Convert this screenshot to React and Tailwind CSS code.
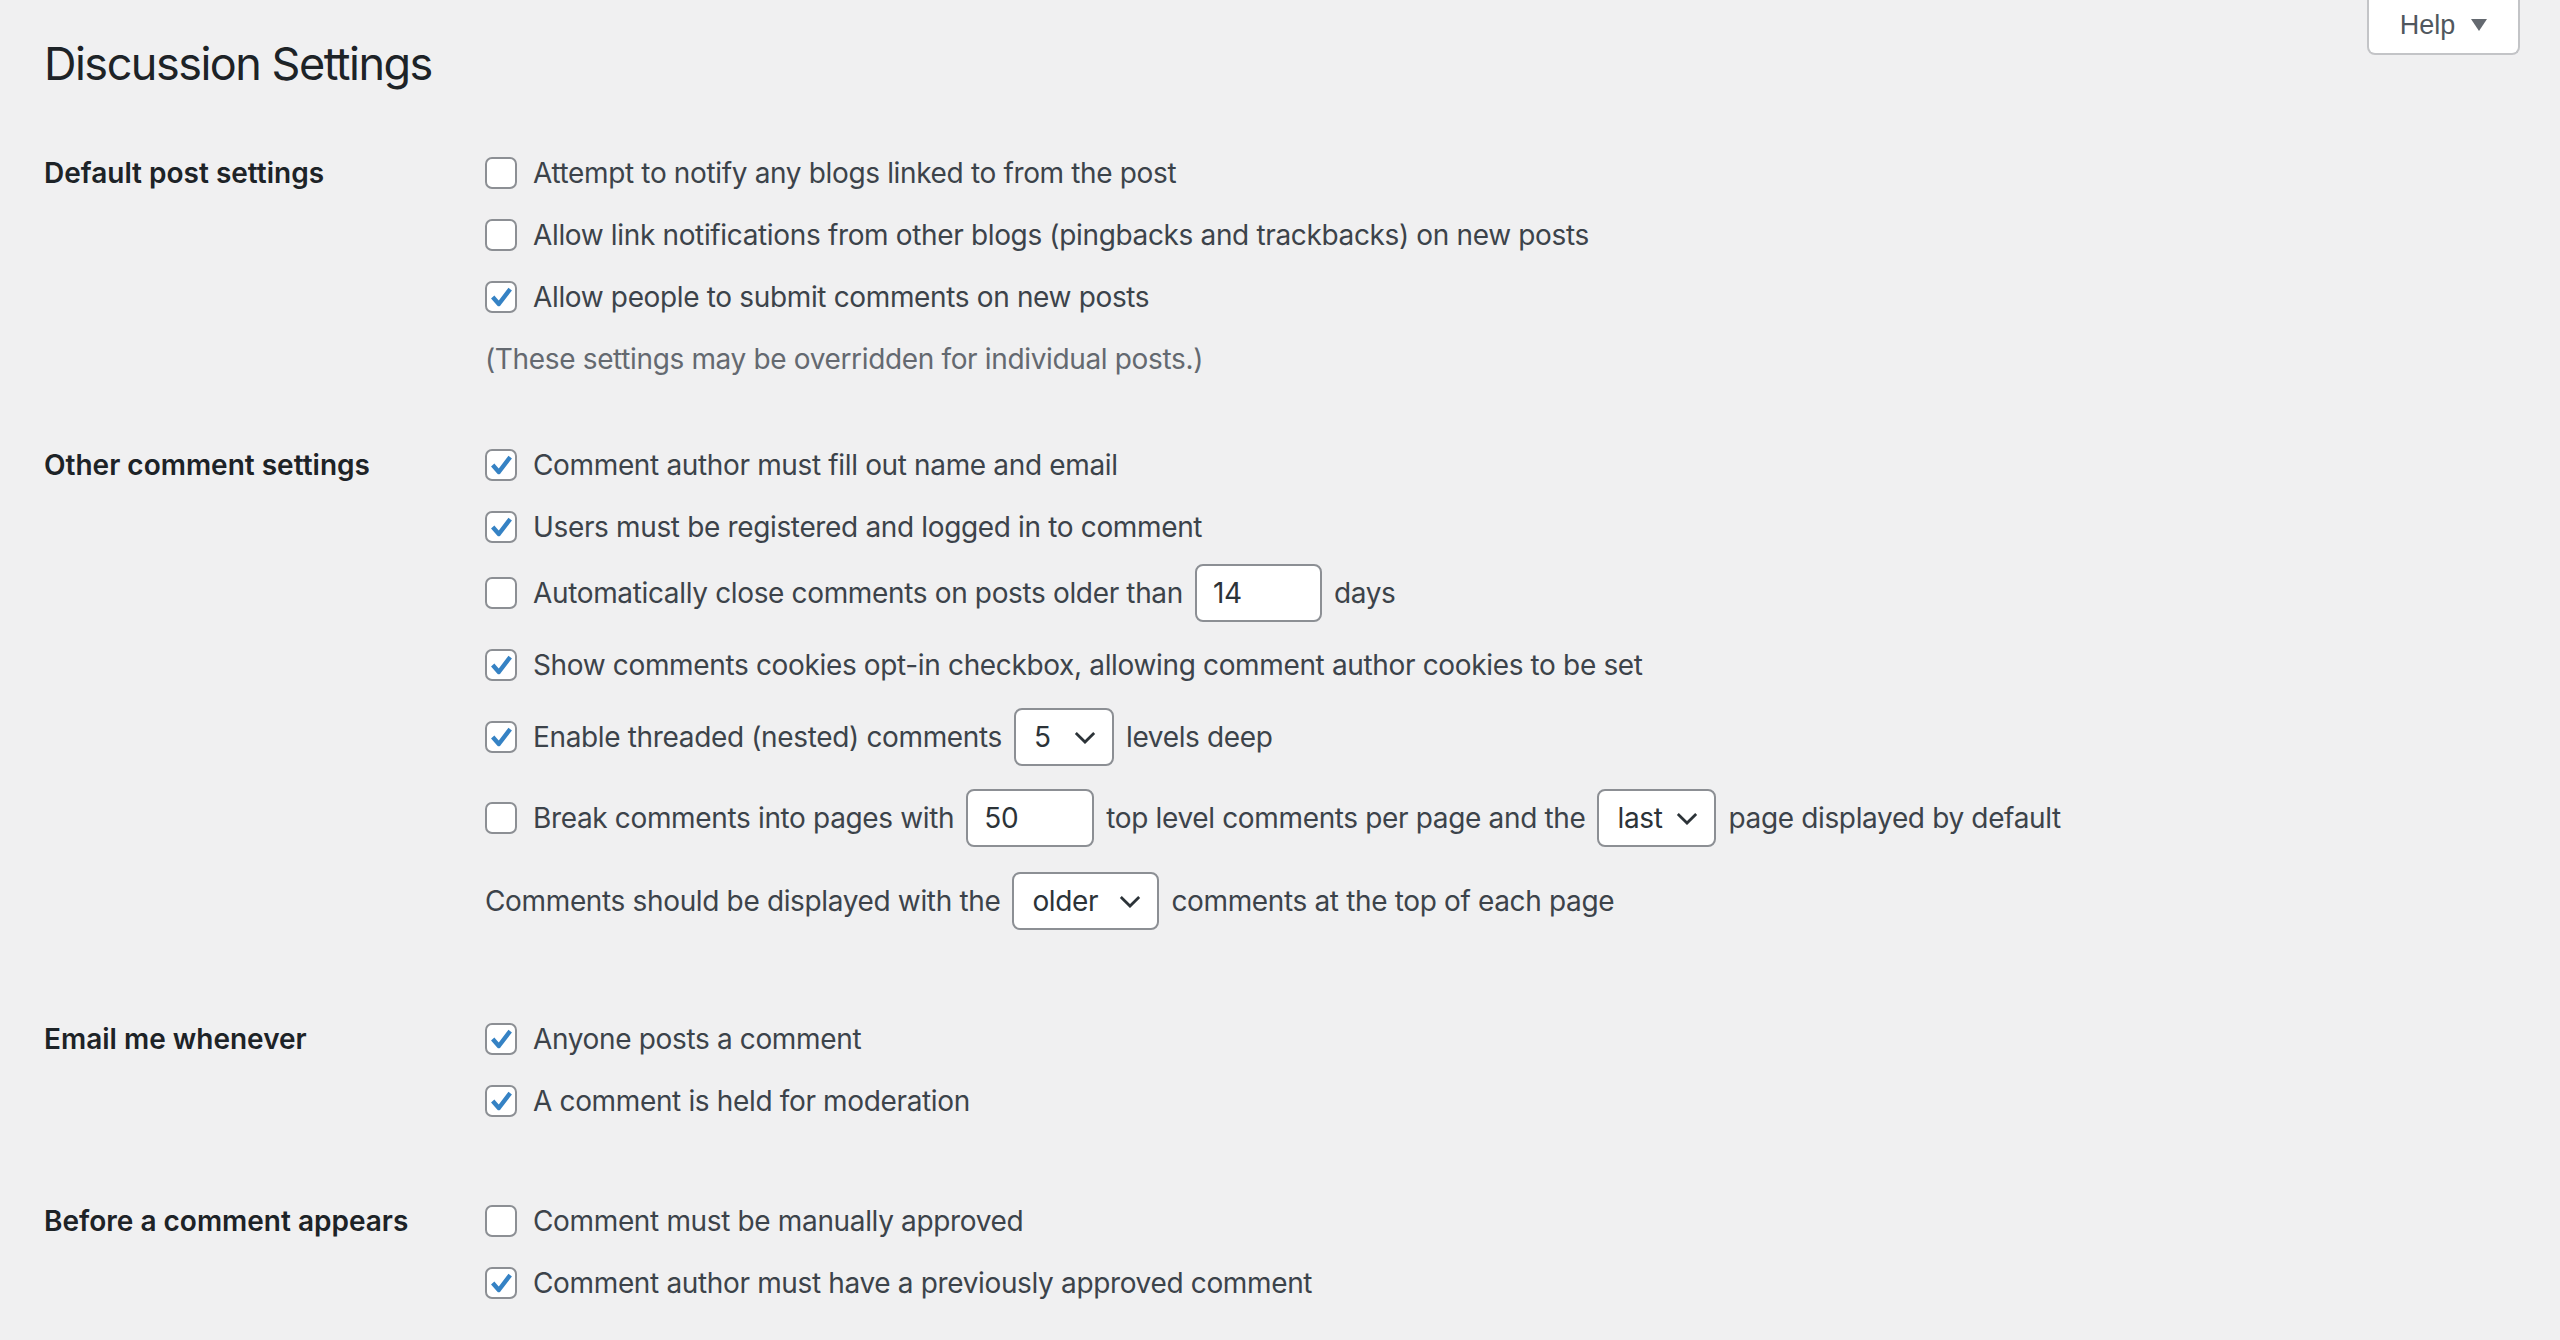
const Checkbox = ({ checked = false }) => (
  <span className="mr-[16px] flex size-[32px] shrink-0 items-center justify-center rounded-[7px] border-2 border-[#8c8f94] bg-white">
    {checked && (
      <svg viewBox="0 0 32 32" className="size-[30px]">
        <path
          d="M6.5 16 L13.5 24 L26.5 7"
          fill="none"
          stroke="#3582c4"
          strokeWidth="5"
          strokeLinejoin="round"
        />
      </svg>
    )}
  </span>
);

const TextInput = ({ value, className = "" }) => (
  <span
    className={`mx-[12px] flex h-[58px] items-center rounded-[8px] border-2 border-[#8c8f94] bg-white pl-[16px] text-[#2c3338] ${className}`}
  >
    {value}
  </span>
);

const Select = ({ value, className = "" }) => (
  <span
    className={`mx-[12px] flex h-[58px] items-center justify-between rounded-[8px] border-2 border-[#8c8f94] bg-white pl-[18px] pr-[16px] text-[#2c3338] ${className}`}
  >
    {value}
    <svg viewBox="0 0 24 14" className="h-[13px] w-[22px]">
      <path
        d="M2 2 L12 12 L22 2"
        fill="none"
        stroke="#2c3338"
        strokeWidth="3"
      />
    </svg>
  </span>
);

const Row = ({ checked, children, h = "h-[62px]" }) => (
  <div className={`flex items-center ${h}`}>
    <Checkbox checked={checked} />
    {children}
  </div>
);

const Section = ({ label, children, className = "" }) => (
  <div className={`grid grid-cols-[441px_1fr] ${className}`}>
    <div className="flex h-[62px] items-center font-semibold tracking-normal text-[#1d2327]">
      {label}
    </div>
    <div>{children}</div>
  </div>
);

export default function App() {
  return (
    <div className="min-h-screen bg-[#f0f0f1] pl-[44px] font-[Inter,sans-serif] text-[28px] tracking-[-0.35px] text-[#3c434a]">
      <div className="flex items-start justify-between">
        <h1 className="pt-[38px] text-[45px] leading-[52px] tracking-[-1.5px] text-[#1d2327]">
          Discussion Settings
        </h1>
        <button className="mr-[40px] flex h-[55px] w-[153px] items-center justify-center gap-[16px] rounded-b-[8px] border-2 border-t-0 border-[#c3c4c7] bg-white pb-[3px] font-[Liberation_Sans,Arial,sans-serif] text-[27px] tracking-normal text-[#50575e]">
          Help
          <svg viewBox="0 0 16 12" className="h-[12px] w-[16px]">
            <path d="M0 0 H16 L8 12 Z" fill="#646970" />
          </svg>
        </button>
      </div>

      <Section label="Default post settings" className="mt-[52px]">
        <Row>Attempt to notify any blogs linked to from the post</Row>
        <Row>
          Allow link notifications from other blogs (pingbacks and trackbacks)
          on new posts
        </Row>
        <Row checked>Allow people to submit comments on new posts</Row>
        <div className="flex h-[62px] items-center text-[#646970]">
          (These settings may be overridden for individual posts.)
        </div>
      </Section>

      <Section label="Other comment settings" className="mt-[44px]">
        <Row checked>Comment author must fill out name and email</Row>
        <Row checked>Users must be registered and logged in to comment</Row>
        <Row h="h-[70px]">
          Automatically close comments on posts older than
          <TextInput value="14" className="w-[127px]" />
          days
        </Row>
        <Row checked h="h-[74px]">
          Show comments cookies opt-in checkbox, allowing comment author
          cookies to be set
        </Row>
        <Row checked h="h-[70px]">
          Enable threaded (nested) comments
          <Select value="5" className="w-[100px]" />
          levels deep
        </Row>
        <Row h="h-[92px]">
          Break comments into pages with
          <TextInput value="50" className="w-[128px]" />
          top level comments per page and the
          <Select value="last" className="w-[119px]" />
          page displayed by default
        </Row>
        <div className="flex h-[74px] items-center">
          Comments should be displayed with the
          <Select value="older" className="w-[147px]" />
          comments at the top of each page
        </div>
      </Section>

      <Section label="Email me whenever" className="mt-[70px]">
        <Row checked>Anyone posts a comment</Row>
        <Row checked>A comment is held for moderation</Row>
      </Section>

      <Section label="Before a comment appears" className="mt-[58px]">
        <Row>Comment must be manually approved</Row>
        <Row checked>Comment author must have a previously approved comment</Row>
      </Section>
    </div>
  );
}
